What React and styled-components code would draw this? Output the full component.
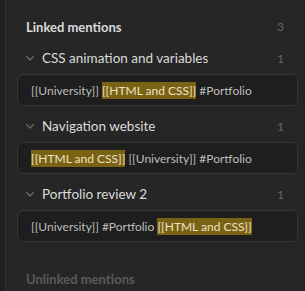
import React from "react";
import styled, { createGlobalStyle } from "styled-components";

const Global = createGlobalStyle`
  html, body { margin: 0; padding: 0; background: #262626; }
  body { font-family: "Segoe UI", Lato, "Noto Sans", sans-serif; }
`;

const Page = styled.div`
  display: flex;
  width: 305px;
  height: 291px;
  overflow: hidden;
  background: #262626;
`;

const Gutter = styled.div`
  width: 5px;
  flex: none;
  background: #1f1f1f;
  border-right: 1px solid #303030;
`;

const Pane = styled.div`
  flex: 1;
  padding: 11px 7px 0 11px;
  display: flex;
  flex-direction: column;
  & > * { flex-shrink: 0; }
`;

const SectionHeader = styled.div`
  display: flex;
  align-items: center;
  justify-content: space-between;
  height: 31px;
  padding: 0 14px 0 9px;
  font-weight: 700;
  font-size: 13px;
  color: ${(p) => (p.$muted ? "#5a5a5a" : "#dadada")};
  margin-top: ${(p) => (p.$gap ? "17px" : "0")};
`;

const Count = styled.span`
  font-weight: 400;
  font-size: 12px;
  color: #666;
`;

const Row = styled.div`
  display: flex;
  align-items: center;
  height: 32px;
  padding: 0 14px 0 9px;
  color: #dadada;
  font-size: 13.5px;
`;

const Title = styled.span`
  flex: 1;
  margin-left: 8px;
`;

const Card = styled.div`
  box-sizing: border-box;
  height: 32px;
  display: flex;
  align-items: center;
  padding: 0 13px;
  background: #1e1e1e;
  border: 1px solid #363636;
  border-radius: 6px;
  margin-bottom: 4px;
  font-size: 12px;
  color: #bdbdbd;
  white-space: pre;
`;

const Mark = styled.span`
  background: #7a6214;
  color: #ece3c4;
  padding: 1px 0;
`;

const Chevron = () => (
  <svg width="8" height="5" viewBox="0 0 8 5" fill="none">
    <path d="M0.6 0.6 L4 4 L7.4 0.6" stroke="#6e6e6e" strokeWidth="1.3" strokeLinecap="round" strokeLinejoin="round" />
  </svg>
);

const items = [
  { title: "CSS animation and variables", parts: ["[[University]] ", { m: "[[HTML and CSS]]" }, " #Portfolio"] },
  { title: "Navigation website", parts: [{ m: "[[HTML and CSS]]" }, " [[University]] #Portfolio"] },
  { title: "Portfolio review 2", parts: ["[[University]] #Portfolio ", { m: "[[HTML and CSS]]" }] },
];

export default function App() {
  return (
    <Page>
      <Global />
      <Gutter />
      <Pane>
        <SectionHeader>
          <span>Linked mentions</span>
          <Count>3</Count>
        </SectionHeader>
        {items.map((it) => (
          <React.Fragment key={it.title}>
            <Row>
              <Chevron />
              <Title>{it.title}</Title>
              <Count>1</Count>
            </Row>
            <Card>
              {it.parts.map((p, i) =>
                typeof p === "string" ? <span key={i}>{p}</span> : <Mark key={i}>{p.m}</Mark>
              )}
            </Card>
          </React.Fragment>
        ))}
        <SectionHeader $muted $gap>
          <span>Unlinked mentions</span>
        </SectionHeader>
      </Pane>
    </Page>
  );
}
